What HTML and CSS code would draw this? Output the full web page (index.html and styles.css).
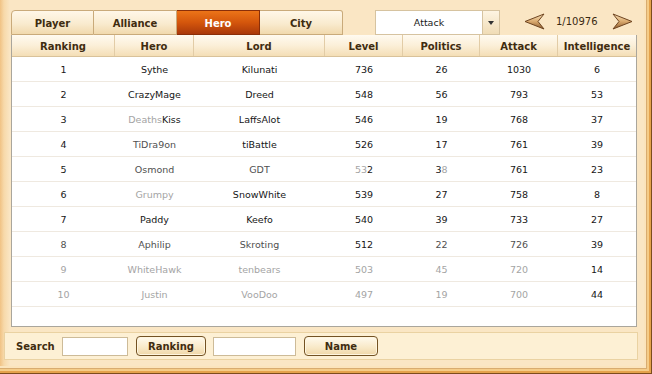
FILE: index.html
```html
<!DOCTYPE html>
<html>
<head>
<meta charset="utf-8">
<link rel="stylesheet" href="styles.css">
</head>
<body>
<div class="frame">
  <div class="topbar">
    <div class="tabs">
      <div class="tab first">Player</div>
      <div class="tab">Alliance</div>
      <div class="tab active">Hero</div>
      <div class="tab last">City</div>
    </div>
    <div class="select">
      <div class="select-value">Attack</div>
      <div class="select-btn"><span class="tri"></span></div>
    </div>
    <div class="pager">
      <svg class="arrow" width="21" height="17" viewBox="0 0 21 17">
        <defs>
          <linearGradient id="ag" x1="0" y1="0" x2="0" y2="1">
            <stop offset="0" stop-color="#f7e0b8"/>
            <stop offset="0.5" stop-color="#d9a96e"/>
            <stop offset="1" stop-color="#8e5c2e"/>
          </linearGradient>
        </defs>
        <path d="M1 8.5 L20 1 L14 8.5 L20 16 Z" fill="url(#ag)" stroke="#6e4420" stroke-width="1" stroke-linejoin="round"/>
      </svg>
      <span class="page">1/10976</span>
      <svg class="arrow" width="21" height="17" viewBox="0 0 21 17">
        <path d="M20 8.5 L1 1 L7 8.5 L1 16 Z" fill="url(#ag)" stroke="#6e4420" stroke-width="1" stroke-linejoin="round"/>
      </svg>
    </div>
  </div>

  <div class="table">
    <div class="row head">
      <div>Ranking</div><div>Hero</div><div>Lord</div><div>Level</div><div>Politics</div><div>Attack</div><div>Intelligence</div>
    </div>
    <div class="row"><div>1</div><div>Sythe</div><div>Kilunati</div><div>736</div><div>26</div><div>1030</div><div>6</div></div>
    <div class="row"><div>2</div><div>CrazyMage</div><div>Dreed</div><div>548</div><div>56</div><div>793</div><div>53</div></div>
    <div class="row"><div>3</div><div><span class="g">Deaths</span>Kiss</div><div>LaffsAlot</div><div>546</div><div>19</div><div>768</div><div>37</div></div>
    <div class="row"><div>4</div><div class="m">TiDra9on</div><div>tiBattle</div><div>526</div><div>17</div><div>761</div><div>39</div></div>
    <div class="row"><div>5</div><div class="m">Osmond</div><div class="m">GDT</div><div><span class="g">53</span>2</div><div>3<span class="g">8</span></div><div>761</div><div>23</div></div>
    <div class="row"><div>6</div><div class="g">Grumpy</div><div>SnowWhite</div><div>539</div><div>27</div><div>758</div><div>8</div></div>
    <div class="row"><div>7</div><div>Paddy</div><div>Keefo</div><div>540</div><div>39</div><div>733</div><div>27</div></div>
    <div class="row"><div class="m">8</div><div class="m">Aphilip</div><div class="m">Skroting</div><div>512</div><div class="m">22</div><div class="m">726</div><div>39</div></div>
    <div class="row"><div class="g">9</div><div class="g">WhiteHawk</div><div class="g">tenbears</div><div class="g">503</div><div class="g">45</div><div class="g">720</div><div>14</div></div>
    <div class="row"><div class="g">10</div><div class="g">Justin</div><div class="g">VooDoo</div><div class="g">497</div><div class="g">19</div><div class="g">700</div><div>44</div></div>
    <div class="filler"></div>
  </div>

  <div class="search">
    <span class="label">Search</span>
    <input class="field f1" type="text">
    <button class="btn b1">Ranking</button>
    <input class="field f2" type="text">
    <button class="btn b2">Name</button>
  </div>
</div>
</body>
</html>
```

FILE: styles.css
```css
html, body {
  margin: 0;
  padding: 0;
  background: #fae6c4;
}

.frame {
  width: 652px;
  height: 374px;
  box-sizing: border-box;
  padding: 10px 0 0 4px;
  background: linear-gradient(to right, #f0c284 0, #f7d9aa 4px, #fae6c4 10px);
  box-shadow:
    inset -1px -1px 0 #7c4c1c,
    inset -3px -3px 0 #e4a24c,
    inset -5px -5px 0 #f5cc88,
    inset -6px -6px 0 #d8ac70,
    inset -8px -8px 0 #fbe4bc;
  font-family: "DejaVu Sans", "Liberation Sans", sans-serif;
  overflow: hidden;
}

/* top bar */
.topbar {
  display: flex;
  align-items: stretch;
  height: 25px;
  margin-left: 7px;
}

.tabs {
  display: flex;
  width: 332px;
}

.tab {
  width: 83px;
  box-sizing: border-box;
  display: flex;
  align-items: center;
  justify-content: center;
  font-weight: bold;
  font-size: 10px;
  color: #3f2c10;
  background: linear-gradient(#fff7e8, #f9ebcf 55%, #f1d9ad);
  border: 1px solid #c9aa7a;
  border-left: none;
  padding-top: 1px;
}

.tab.first {
  border-left: 1px solid #c9aa7a;
  border-top-left-radius: 4px;
}

.tab.last {
  border-top-right-radius: 3px;
}

.tab.active {
  color: #ffffff;
  background: linear-gradient(#ec7418, #d4560c 50%, #a9380a);
  border-color: #8a2e08;
}

.select {
  display: flex;
  margin-left: 32px;
  width: 125px;
  height: 25px;
  box-sizing: border-box;
  border: 1px solid #d6c3a0;
  background: #ffffff;
}

.select-value {
  flex: 1;
  display: flex;
  align-items: center;
  justify-content: center;
  font-size: 9.5px;
  color: #1a1a1a;
}

.select-btn {
  width: 16px;
  border-left: 1px solid #d6c3a0;
  background: linear-gradient(#fdf4e2, #f0dcb6);
  display: flex;
  align-items: center;
  justify-content: center;
}

.tri {
  width: 0;
  height: 0;
  border-left: 3px solid transparent;
  border-right: 3px solid transparent;
  border-top: 4px solid #333;
}

.pager {
  display: flex;
  align-items: center;
  margin-left: 24px;
  height: 22px;
}

.arrow {
  display: block;
}

.page {
  font-size: 10px;
  color: #3a2a12;
  margin: 0 12px 0 11px;
  width: 44px;
}

/* table */
.table {
  margin-left: 7px;
  width: 626px;
  height: 292px;
  box-sizing: border-box;
  background: #ffffff;
  border-left: 1px solid #aaa69c;
  border-right: 1px solid #aaa69c;
  border-bottom: 1px solid #aaa69c;
  display: flex;
  flex-direction: column;
}

.row {
  display: grid;
  grid-template-columns: 103px 79px 131px 78px 77px 78px 78px;
  height: 25px;
  box-sizing: border-box;
  border-bottom: 1px solid #efe9e0;
  font-size: 9.5px;
  color: #161616;
}

.row > div {
  display: flex;
  align-items: center;
  justify-content: center;
  padding-top: 1px;
}

.row.head {
  height: 22px;
  background: linear-gradient(#fffaf0, #fbefd8 50%, #f4deb6);
  border-bottom: 1px solid #d9c29a;
  font-weight: bold;
  font-size: 10px;
  color: #3f2c10;
}

.row.head > div {
  border-right: 1px solid #e2cca6;
}

.row.head > div:last-child {
  border-right: none;
}

.g { color: #a4a4a4; }
.m { color: #505050; }

.filler {
  flex: 1;
}

/* search */
.search {
  margin-top: 5px;
  width: 634px;
  height: 28px;
  box-sizing: border-box;
  border: 1px solid #ead2a2;
  background: #fdf0d4;
  display: flex;
  align-items: center;
  padding-left: 11px;
}

.label {
  width: 46px;
  font-weight: bold;
  font-size: 10px;
  color: #3f2c10;
}

.field {
  height: 19px;
  box-sizing: border-box;
  border: 1px solid #cdbb98;
  background: #ffffff;
  margin: 0;
  padding: 0;
}

.f1 { width: 66px; }
.f2 { width: 83px; margin-left: 7px; }

.btn {
  height: 20px;
  box-sizing: border-box;
  border: 1px solid #735223;
  border-radius: 4px;
  background: linear-gradient(#fffaee, #f8e8c6 60%, #efd7a8);
  box-shadow: inset 0 0 0 1px #fff6e0;
  font-family: "DejaVu Sans", "Liberation Sans", sans-serif;
  font-weight: bold;
  font-size: 10px;
  color: #3f2c10;
  padding: 0;
  margin: 0;
}

.b1 { width: 70px; margin-left: 8px; }
.b2 { width: 74px; margin-left: 8px; }
```
